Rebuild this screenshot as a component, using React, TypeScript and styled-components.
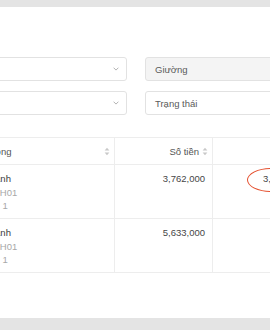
import React from 'react';
import styled, { createGlobalStyle } from 'styled-components';

const GlobalStyle = createGlobalStyle`
  html, body {
    margin: 0;
    padding: 0;
    background: #ffffff;
  }
  body {
    font-family: "Liberation Sans", Arial, sans-serif;
    font-size: 9px;
    color: #333;
  }
`;

const Viewport = styled.div`
  width: 270px;
  height: 330px;
  overflow: hidden;
  display: flex;
  flex-direction: column;
`;

const GrayBar = styled.div<{ h: number }>`
  flex: 0 0 ${props => props.h}px;
  background-color: #e4e4e4;
`;

const Main = styled.div`
  flex: 1;
  background: #fff;
  padding-top: 50px;
  margin-left: -40px;
  width: 400px;
`;

const FilterGrid = styled.div`
  display: grid;
  grid-template-columns: 167px 167px;
  column-gap: 18px;
  row-gap: 10px;
`;

const Select = styled.div<{ disabled?: boolean }>`
  height: 24px;
  box-sizing: border-box;
  border: 1px solid #e2e2e2;
  border-radius: 3px;
  background-color: ${props => (props.disabled ? '#f4f4f4' : '#fff')};
  display: flex;
  align-items: center;
  justify-content: space-between;
  padding: 0 7px 0 9px;
  color: #5a5a5a;
  font-size: 9.5px;
`;

const Chevron = () => (
  <svg width="6" height="4" viewBox="0 0 6 4">
    <path d="M0.6 0.7 L3 3.1 L5.4 0.7" fill="none" stroke="#a9a9a9" strokeWidth="0.9" />
  </svg>
);

const Table = styled.div`
  margin-top: 22px;
  border-top: 1px solid #ededed;
`;

const Row = styled.div<{ header?: boolean }>`
  display: grid;
  grid-template-columns: 155px 98px 138px;
  height: ${props => (props.header ? 26 : 53)}px;
  border-bottom: 1px solid #ededed;
`;

const Cell = styled.div<{ align?: string; divider?: boolean; padLeft?: number }>`
  box-sizing: border-box;
  border-right: ${props => (props.divider ? '1px solid #ededed' : 'none')};
  padding: 7px 7px 0 ${props => props.padLeft ?? 24}px;
  display: flex;
  flex-direction: column;
  align-items: ${props => (props.align === 'right' ? 'flex-end' : 'flex-start')};
  position: relative;
`;

const HeadCell = styled(Cell)`
  padding-top: 0;
  padding-right: 4px;
  flex-direction: row;
  align-items: center;
  justify-content: ${props => (props.align === 'right' ? 'flex-end' : 'space-between')};
  color: #555;
  font-size: 9.5px;
`;

const SortIcon = () => (
  <svg width="6" height="9" viewBox="0 0 6 9" style={{ marginLeft: 3 }}>
    <path d="M3 0.8 L5.4 3.6 L0.6 3.6 Z" fill="#c8c8c8" />
    <path d="M3 8.2 L5.4 5.4 L0.6 5.4 Z" fill="#c8c8c8" />
  </svg>
);

const Name = styled.span`
  color: #3c3c3c;
  line-height: 13.5px;
  font-size: 9.5px;
`;

const Sub = styled.span`
  color: #a8a8a8;
  line-height: 13.5px;
  font-size: 9.5px;
`;

const Amount = styled.span`
  color: #464646;
  line-height: 13.5px;
  font-size: 9.5px;
`;

const Highlight = styled.div`
  position: absolute;
  left: 34px;
  top: 3px;
  width: 46px;
  height: 22px;
  border: 1px solid #e5502f;
  border-radius: 50%;
`;

const rows = [
  { name: 'Thanh', code: 'Mã H01', floor: 'Lầu 1', amount: '3,762,000', paid: '3,762,000' },
  { name: 'Thanh', code: 'Mã H01', floor: 'Lầu 1', amount: '5,633,000', paid: '' },
];

const App: React.FC = () => {
  return (
    <>
      <GlobalStyle />
      <Viewport>
        <GrayBar h={7} />
        <Main>
          <FilterGrid>
            <Select>
              <span>Phòng</span>
              <Chevron />
            </Select>
            <Select disabled>Giường</Select>
            <Select>
              <span>Tầng</span>
              <Chevron />
            </Select>
            <Select>Trạng thái</Select>
          </FilterGrid>

          <Table>
            <Row header>
              <HeadCell divider>
                <span>Phòng</span>
                <SortIcon />
              </HeadCell>
              <HeadCell divider align="right">
                <span>Số tiền</span>
                <SortIcon />
              </HeadCell>
              <HeadCell />
            </Row>
            {rows.map((r, i) => (
              <Row key={i}>
                <Cell divider>
                  <Name>{r.name}</Name>
                  <Sub>{r.code}</Sub>
                  <Sub>{r.floor}</Sub>
                </Cell>
                <Cell divider align="right">
                  <Amount>{r.amount}</Amount>
                </Cell>
                <Cell padLeft={50}>
                  {r.paid && <Amount>{r.paid}</Amount>}
                  {i === 0 && <Highlight />}
                </Cell>
              </Row>
            ))}
          </Table>
        </Main>
        <GrayBar h={12} />
      </Viewport>
    </>
  );
};

export default App;
